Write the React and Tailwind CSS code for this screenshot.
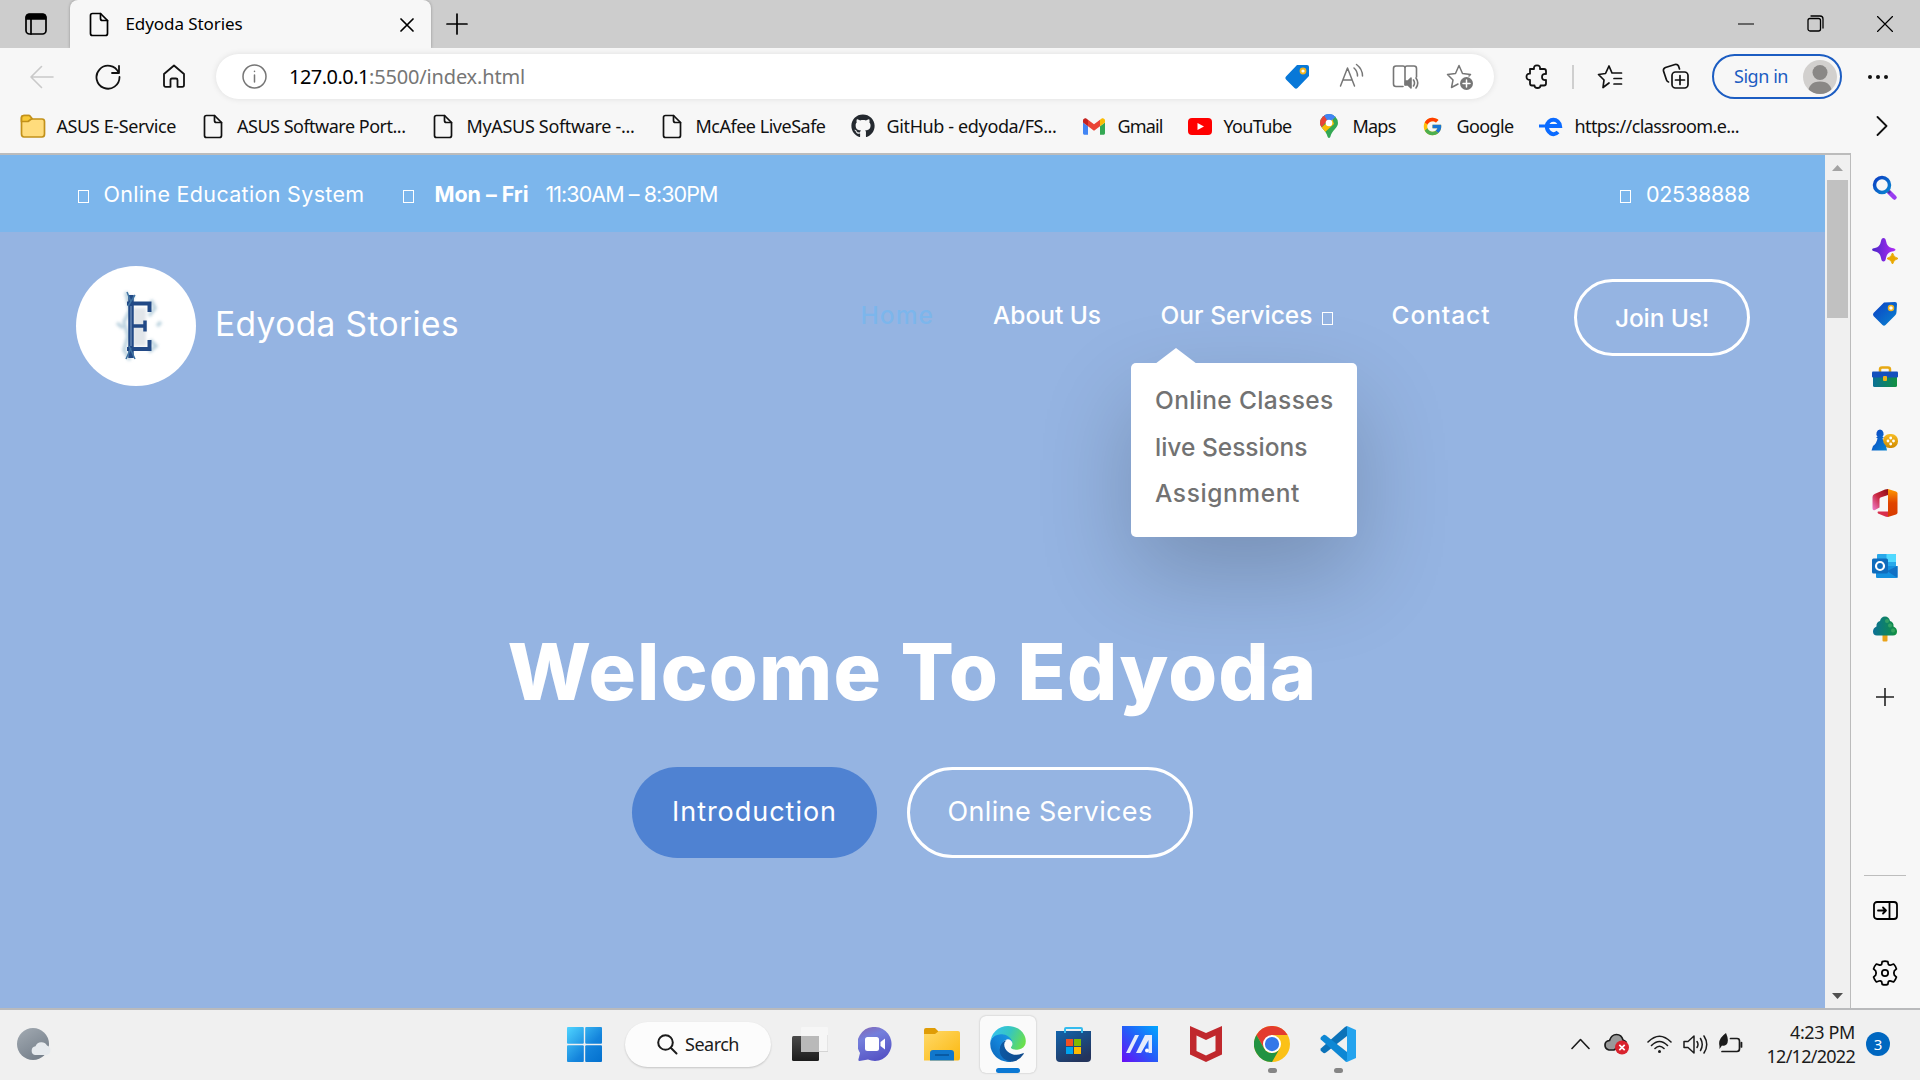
import { useLayoutEffect, useRef, useState } from "react";
import { FaGithub } from "react-icons/fa";
import { FcGoogle } from "react-icons/fc";

/* Single line of text whose tracking is computed so that it fills `w` pixels. */
function Fit({ w, className = "", children }) {
  const ref = useRef(null);
  const [ls, setLs] = useState(0);
  useLayoutEffect(() => {
    const el = ref.current;
    el.style.letterSpacing = "0px";
    const natural = el.getBoundingClientRect().width;
    const n = el.textContent.length;
    const v = (w - natural) / n;
    el.style.letterSpacing = v + "px";
    setLs(v);
  }, [w]);
  return (
    <span ref={ref} className={"inline-block shrink-0 whitespace-nowrap " + className} style={{ letterSpacing: ls + "px" }}>
      {children}
    </span>
  );
}

function Svg({ w = 24, h, vb = "0 0 24 24", className = "", children, sw = 1.6 }) {
  return (
    <svg width={w} height={h ?? w} viewBox={vb} fill="none" stroke="currentColor" strokeWidth={sw} strokeLinecap="round" strokeLinejoin="round" className={"shrink-0 " + className}>
      {children}
    </svg>
  );
}

const PageIcon = ({ className = "" }) => (
  <Svg w={20} h={25} vb="0 0 20 25" className={className} sw={1.7}>
    <path d="M3.5 1.5H11.5L18.5 8.500V21.500Q18.500 23.500 16.500 23.500H3.500Q1.500 23.500 1.500 21.500V3.500Q1.500 1.500 3.500 1.500Z" />
    <path d="M11.500 1.500V6.500Q11.500 8.500 13.500 8.500H18.500" />
  </Svg>
);

const Tofu = ({ className = "" }) => <span className={"inline-block h-[13px] w-[11px] shrink-0 border border-white " + className} />;

function TabStrip() {
  return (
    <div className="flex h-12 items-center bg-[#cdcdcd] text-black">
      <Svg w={22} className="ml-[25px]" vb="0 0 22 22" sw={1.7}>
        <rect x="1" y="1" width="20" height="20" rx="3.500" />
        <path d="M1.500 6V4Q1.500 1.500 4 1.500H18Q20.500 1.500 20.500 4V6Z" fill="currentColor" />
        <path d="M6 6V21" />
      </Svg>
      <div className="ml-[23px] flex h-12 w-[361px] items-center rounded-t-lg bg-[#f7f7f7] shadow-[0_0_3px_rgba(0,0,0,0.3)]">
        <PageIcon className="ml-[19px]" />
        <Fit w={117} className="mb-px ml-[16.5px] text-[17px] leading-6">Edyoda Stories</Fit>
        <Svg w={14} className="mt-[2px] ml-[157.5px]" vb="0 0 14 14" sw={1.7}><path d="M1 1L13 13M13 1L1 13" /></Svg>
      </div>
      <Svg w={22} className="mb-px ml-[15px]" vb="0 0 22 22" sw={1.700}><path d="M1 11H21M11 1V21" /></Svg>
      <div className="ml-auto flex items-center pr-[27px]">
        <Svg w={16} vb="0 0 16 16" sw={1.2}><path d="M0 8H16" /></Svg>
        <Svg w={17} className="mb-px ml-[53px]" vb="0 0 17 17" sw={1.3}>
          <rect x="1" y="3.500" width="12.500" height="12.500" rx="2" /><path d="M4 1H13Q16 1 16 4V13" />
        </Svg>
        <Svg w={16} className="ml-[53px]" vb="0 0 16 16" sw={1.200}><path d="M.5.5L15.500 15.500M15.500.5L.5 15.500" /></Svg>
      </div>
    </div>
  );
}

function Toolbar() {
  return (
    <div className="flex h-[57px] items-center bg-[#f7f7f7] text-[#111]">
      <Svg w={24} className="ml-[30px] text-[#c9c9c9]"><path d="M23 12H1M11.500 1.500L1 12L11.500 22.500" /></Svg>
      <Svg w={26} className="ml-[41px]" vb="0 0 26 26" sw={1.800}><path d="M23.500 8.500A11.500 11.500 0 1 0 24.500 13M24 2V9H17" /></Svg>
      <Svg w={24} className="mb-[2px] ml-[41px]" sw={1.800}><path d="M2 10L12 1.500L22 10V21Q22 22.800 20.300 22.800H15.500V16Q15.500 14.500 14 14.500H10Q8.500 14.500 8.500 16V22.800H3.700Q2 22.800 2 21Z" /></Svg>
      <div className="ml-[30px] flex h-[45px] w-[1278px] items-center rounded-full bg-white text-[#767676] shadow-[0_0_6px_rgba(0,0,0,0.1)]">
        <Svg w={25} className="ml-[26px]" vb="0 0 25 25" sw={1.500}><circle cx="12.500" cy="12.500" r="11.500" /><path d="M12.500 11V18M12.500 7.200V7.500" /></Svg>
        <Fit w={80} className="ml-[22px] text-[20px] leading-7 text-black">127.0.0.1</Fit>
        <Fit w={156} className="text-[20px] leading-7 text-[#767676]">:5500/index.html</Fit>
        <Svg w={26} className="ml-[759px]" vb="0 0 26 26"><path d="M13 1H23Q25 1 25 3V12L13.500 24Q12 25.500 10.500 24L2 15.500Q.5 14 2 12.500Z" fill="#0878d8" stroke="none" /><circle cx="19" cy="7" r="2.500" fill="#fff" stroke="#f2b51d" strokeWidth="1.800" /></Svg>
        <Svg w={25} className="mb-[2px] ml-[29px]" vb="0 0 25 25" sw={1.500}><path d="M1.500 23L8.500 5L15.500 23M4 17H13M15 5Q18.500 8 18.500 13M17.500 1.500Q23.500 6 23.500 13" /></Svg>
        <Svg w={28} className="ml-[28px]" vb="0 0 28 26" sw={1.600}>
          <path d="M13 4V21M13 4Q13 2 11 2H4Q1.500 2 1.500 4.500V20Q1.500 22.500 4 22.500H11M13 4Q13 2 15 2H22Q24.500 2 24.500 4.500V13" />
          <path d="M13.500 17H16L19 14V24L16 21H13.500Z" fill="currentColor" /><path d="M21.500 16Q23.500 19 21.500 22M24 14Q27.500 19 24 24" />
        </Svg>
        <Svg w={28} className="ml-[26px]" vb="0 0 28 28" sw={1.500}>
          <path d="M12 21L5.500 24.500L7 17L1.500 11.500L9.500 10.500L13 2.500L16.500 10.500L24.500 11.500L23 13" />
          <circle cx="20.500" cy="20.500" r="6.500" fill="currentColor" stroke="none" /><path d="M20.500 17V24M17 20.500H24" stroke="#fff" />
        </Svg>
      </div>
      <Svg w={25} className="ml-[31px]" vb="0 0 25 25" sw={1.800}><path d="M5 5H9Q8.500 1.300 12 1.300Q15.500 1.300 15 5H19Q21 5 21 7V10Q17 9.500 17 13Q17 16.500 21 16V19.500Q21 21.500 19 21.500H15.500Q15.500 24 12.500 24Q9.500 24 9.500 21.500H7Q5 21.500 5 19.500V16Q1.500 16 1.500 12.700Q1.500 9.500 5 9.700Z" /></Svg>
      <div className="ml-[22px] h-6 w-[2px] bg-[#cfcfcf]" />
      <Svg w={26} className="ml-[23px]" vb="0 0 26 26" sw={1.700}><path d="M12 19L6 23.500L7 16L1.500 10.500L8.500 9.500L12 2L15 9H24.500M17 14.500H24.500M17 20H24.500" /></Svg>
      <Svg w={27} className="ml-[39px]" vb="0 0 27 27" sw={1.700}><rect x="10" y="9" width="16" height="16" rx="3.500" /><path d="M18 12.500V21.500M13.500 17H22.500M6.500 19Q5 18.500 4.500 17L1.500 8Q1 5.500 3.500 4.500L13 1.500Q15.500 1 16.500 3L17.500 6" /></Svg>
      <div className="ml-[23px] flex h-[45px] w-[130px] items-center rounded-full border-2 border-[#1c5dc2] text-[#1c5dc2]">
        <Fit w={54} className="mb-px ml-[20px] text-[18px] leading-6">Sign in</Fit>
        <svg width="34" height="34" viewBox="0 0 34 34" className="ml-[15px] shrink-0"><clipPath id="av"><circle cx="17" cy="17" r="17" /></clipPath><g clipPath="url(#av)"><rect width="34" height="34" fill="#d2d0ce" /><circle cx="17" cy="12.500" r="7.500" fill="#8a8886" /><path d="M5 34Q5 21.500 17 21.500Q29 21.500 29 34Z" fill="#8a8886" /></g></svg>
      </div>
      <svg width="22" height="6" viewBox="0 0 22 6" className="ml-[25px] shrink-0" fill="currentColor"><circle cx="3" cy="3" r="2" /><circle cx="11" cy="3" r="2" /><circle cx="19" cy="3" r="2" /></svg>
    </div>
  );
}

const FolderMark = () => (
  <Svg w={26} vb="0 0 26 26" className="-mx-px" sw={1.700}><path d="M1.500 5Q1.500 2.500 4 2.500H9L12 6H22Q24.500 6 24.500 8.500V21Q24.500 24 22 24H4Q1.500 24 1.500 21Z" fill="#ffdc7c" stroke="#c2911a" /><path d="M1.500 8.500H8L12 5.500L9.500 2.500H4Q1.500 2.500 1.500 5Z" fill="#f8c937" stroke="#c2911a" /></Svg>
);
const Gmail = () => (
  <svg width="22" height="17" viewBox="52 42 88 66"><path fill="#4285f4" d="M58 108h14V74L52 59v43c0 3.320 2.690 6 6 6" /><path fill="#34a853" d="M120 108h14c3.320 0 6-2.690 6-6V59l-20 15" /><path fill="#fbbc04" d="M120 48v26l20-15v-8c0-7.420-8.470-11.650-14.400-7.200" /><path fill="#ea4335" d="M72 74V48l24 18 24-18v26L96 92" /><path fill="#c5221f" d="M52 51v8l20 15V48l-5.600-4.200c-5.940-4.450-14.400-.22-14.400 7.200" /></svg>
);
const YouTube = () => (<svg width="24" height="17" viewBox="0 0 24 17"><rect width="24" height="17" rx="4" fill="#f00" /><path d="M9.500 5L16 8.500L9.500 12Z" fill="#fff" /></svg>);
const MapsPin = () => (
  <svg width="18" height="24" viewBox="0 0 18 24"><clipPath id="pin"><path d="M9 0A9 9 0 0 1 18 9C18 14 12 16 10.300 23Q9 25 7.700 23C6 16 0 14 0 9A9 9 0 0 1 9 0Z" /></clipPath>
    <g clipPath="url(#pin)"><rect width="18" height="24" fill="#34a853" /><path d="M0 0H18L9 9Z" fill="#4285f4" /><path d="M0 0L4 0L9 5L0 15Z" fill="#ea4335" /><path d="M0 15L12 4L14 10L4 19Z" fill="#fbbc04" /><path d="M3 0H18L9 9Z" fill="#4285f4" /></g><circle cx="9" cy="9" r="3.300" fill="#fff" /></svg>
);
const ClassroomE = () => (<svg width="24" height="22" viewBox="0 0 24 22" fill="none"><path d="M8 11H21A6.700 7.500 0 0 0 7.800 11A6.700 8 0 0 0 19 17" stroke="#0b6bff" strokeWidth="4" /><path d="M0 11H8" stroke="#0b6bff" strokeWidth="3" /></svg>);

const bookmarks = [
  [FolderMark, "ASUS E-Service", 119.5], [PageIcon, "ASUS Software Port...", 168.500], [PageIcon, "MyASUS Software -...", 168],
  [PageIcon, "McAfee LiveSafe", 130], [() => <FaGithub size={24} color="#24292f" />, "GitHub - edyoda/FS...", 170], [Gmail, "Gmail", 45],
  [YouTube, "YouTube", 68], [MapsPin, "Maps", 43], [() => <FcGoogle size={21} />, "Google", 57], [ClassroomE, "https://classroom.e...", 164.500],
];

function Bookmarks() {
  return (
    <div className="flex h-12 items-center gap-[25px] bg-[#f7f7f7] pb-[6px] pl-[20.5px] text-[#111]">
      {bookmarks.map(([Icon, label, w]) => (
        <div key={label} className="flex h-full items-center gap-[12px]">
          <span className="flex w-6 justify-center">{<Icon />}</span>
          <Fit w={w} className="mb-[1px] text-[18px] leading-6">{label}</Fit>
        </div>
      ))}
      <Svg w={12} h={20} className="mr-[32px] ml-auto" vb="0 0 12 20" sw={1.800}><path d="M1.500 1L10.500 10L1.500 19" /></Svg>
    </div>
  );
}

function Logo() {
  return (
    <div className="flex h-[120px] w-[120px] shrink-0 items-center justify-center rounded-full bg-white">
      <svg width="70" height="80" viewBox="0 0 70 80">
        <defs><filter id="ink" x="-20%" y="-20%" width="140%" height="140%"><feGaussianBlur stdDeviation="1.500" /></filter><filter id="soft"><feGaussianBlur stdDeviation=".5" /></filter></defs>
        <g filter="url(#ink)" stroke="#a9c6d6" strokeWidth="3.500" fill="none" opacity=".8"><path d="M25 6L29 24L23 36L27 50L23 64L29 74M32 10L28 20M50 14L54 22L48 30M49 54L55 60L48 66M16 37L22 42M56 40L60 36" /><path d="M32 22H45V60H32Z" fill="#dadfe4" stroke="none" /></g>
        <g filter="url(#soft)" fill="none" stroke="#234a86"><path d="M30 9V72" strokeWidth="5.500" /><path d="M26 17.500H48.500V26M26 63H48.500V54" strokeWidth="4" /><path d="M31 40H44M44 34.500V45.500" strokeWidth="3.500" /><path d="M26 6L30 16M34 9L27 20M25 73L30 62M34 73L28 60" strokeWidth="1.500" stroke="#3f73a2" /><path d="M30 20V60" stroke="#6485b0" strokeWidth="1.500" /></g>
      </svg>
    </div>
  );
}

function Site() {
  return (
    <div className="flex w-[1825px] flex-col bg-[#95b4e2] font-[Inter,sans-serif] text-white">
      <div className="flex h-[77px] items-start bg-[#7cb6ec] pt-[23px] pl-[78px] text-[21.5px] leading-8">
        <Tofu className="mt-[12px]" />
        <Fit w={261} className="ml-[14.5px]">Online Education System</Fit>
        <Tofu className="mt-[12px] ml-[38.5px]" />
        <Fit w={94} className="ml-[20.5px] font-bold">Mon – Fri</Fit>
        <Fit w={172} className="ml-[17px]">11:30AM – 8:30PM</Fit>
        <Tofu className="mt-[12px] mr-[15px] ml-auto" />
        <Fit w={104} className="mr-[75px]">02538888</Fit>
      </div>
      <div className="flex pt-[34px] pl-[76px]">
        <Logo />
        <Fit w={244} className="mt-[34px] ml-[19px] text-[33.5px] leading-[48px]">Edyoda Stories</Fit>
        <nav className="ml-auto flex text-[24.5px] leading-9 font-medium">
          <Fit w={73.5} className="mt-[31px] text-[#7cb6ec]">Home</Fit>
          <Fit w={108} className="mt-[31px] ml-[59px]">About Us</Fit>
          <div className="relative mt-[31px] ml-[59.5px] flex">
            <Fit w={152}>Our Services</Fit>
            <Tofu className="mt-[15px] ml-[9.5px]" />
            <div className="absolute top-[66px] -left-[29.5px] flex h-[174px] w-[226px] flex-col rounded-[5px] bg-white pt-[14px] pl-[24px] leading-[46.5px] text-[#727272] shadow-[0_38px_95px_rgba(0,0,0,0.2)]">
              <span className="absolute -top-[15px] left-[24px] h-4 w-[42px] bg-white [clip-path:polygon(50%_0,100%_100%,0_100%)]" />
              <Fit w={178.5} className="self-start">Online Classes</Fit>
              <Fit w={152.5} className="self-start">live Sessions</Fit>
              <Fit w={145} className="self-start">Assignment</Fit>
            </div>
          </div>
          <Fit w={99} className="mt-[31px] ml-[58.5px]">Contact</Fit>
          <div className="mt-[13px] mr-[75px] ml-[83.5px] flex h-[77px] w-[176px] justify-center rounded-full border-[3px] border-white pt-[18px]">
            <Fit w={94}>Join Us!</Fit>
          </div>
        </nav>
      </div>
      <main className="mt-[225px] flex flex-col items-center">
        <Fit w={810} className="text-[79px] leading-[120px] font-extrabold">Welcome To Edyoda</Fit>
        <div className="mt-[36px] flex gap-[30px] text-[27px] leading-10">
          <div className="flex h-[91px] w-[245px] justify-center rounded-full bg-[#4f82d2] pt-[25px]"><Fit w={165}>Introduction</Fit></div>
          <div className="flex h-[91px] w-[286px] justify-center rounded-full border-[3px] border-white pt-[22px]"><Fit w={205}>Online Services</Fit></div>
        </div>
      </main>
    </div>
  );
}

function Scrollbar() {
  return (
    <div className="flex w-[25px] flex-col items-center bg-[#f0f0f0]">
      <div className="mt-[10px] h-[6px] w-[11px] bg-[#a3a3a3] [clip-path:polygon(50%_0,100%_100%,0_100%)]" />
      <div className="mt-[9px] h-[138px] w-[21px] bg-[#c1c1c1]" />
      <div className="mt-auto mb-[9px] h-[6px] w-[11px] bg-[#505050] [clip-path:polygon(0_0,100%_0,50%_100%)]" />
    </div>
  );
}

function SideBar() {
  const cell = "flex h-[63px] items-center justify-center";
  return (
    <div className="flex w-[70px] flex-col border-l border-[#bcbcbc] bg-[#f7f7f7] pt-[3.5px] pr-px text-[#222]">
      <svg width="0" height="0" className="absolute"><defs>
        <linearGradient id="bl" x1="0" y1="0" x2="1" y2="1"><stop stopColor="#0c3fc4" /><stop offset="1" stopColor="#0a86d0" /></linearGradient>
        <linearGradient id="pu" x1="0" y1="0" x2="1" y2="0"><stop stopColor="#4a25c8" /><stop offset="1" stopColor="#b12cf5" /></linearGradient>
        <linearGradient id="gn" x1="0" y1="0" x2="1" y2="0"><stop stopColor="#0b7096" /><stop offset="1" stopColor="#129140" /></linearGradient>
        <linearGradient id="go" x1="0" y1="0" x2="0" y2="1"><stop stopColor="#f7bd25" /><stop offset="1" stopColor="#d08a00" /></linearGradient>
        <linearGradient id="of" x1="1" y1="0" x2="0" y2="1"><stop stopColor="#8d0d14" /><stop offset=".5" stopColor="#c92740" /><stop offset="1" stopColor="#ef7fcf" /></linearGradient>
        <linearGradient id="oo" x1="0" y1="0" x2="0" y2="1"><stop stopColor="#ff9a00" /><stop offset=".5" stopColor="#e04400" /><stop offset="1" stopColor="#d83b01" /></linearGradient>
      </defs></svg>
      <div className={cell}><svg width="26" height="26" viewBox="0 0 26 26" fill="none"><path d="M16 16L22.500 22.500" stroke="#9a3df0" strokeWidth="4.500" strokeLinecap="round" /><path d="M15.500 15.500L18 18" stroke="#4a3a9c" strokeWidth="2.500" /><circle cx="10" cy="10" r="7.500" stroke="url(#bl)" strokeWidth="3.500" /></svg></div>
      <div className={cell}><svg width="28" height="28" viewBox="0 0 28 28"><path d="M12.500 1Q14.500 1 15 4Q16 10 21 11Q24.500 11.500 24.500 12.700T21 14.500Q16 15.500 15 21Q14.500 24.500 12.500 24.500T10 21Q9 15.500 4 14.500Q1 14 1 12.700T4 11Q9 10 10 4Q10.500 1 12.500 1Z" fill="url(#pu)" /><path d="M21.500 16Q22.500 20.500 27 21.500Q22.500 22.500 21.500 27Q20.500 22.500 16 21.500Q20.500 20.500 21.500 16Z" fill="#eaa800" stroke="#eaa800" /></svg></div>
      <div className={cell}><svg width="26" height="26" viewBox="0 0 26 26"><path d="M12 1.500L23 1Q25 1 25 3L24.500 11Q24.500 13 23 14.500L13.500 24Q12 25.500 10.500 24L1.500 15Q.5 13.500 1.500 12Z" fill="url(#bl)" /><circle cx="19" cy="7" r="2.500" fill="#fff" stroke="#f2b51d" strokeWidth="1.500" /></svg></div>
      <div className={cell}><svg width="26" height="22" viewBox="0 0 26 22"><path d="M8 6V3.500Q8 1.500 10 1.500H16Q18 1.500 18 3.500V6" stroke="#e7a914" strokeWidth="2.500" fill="none" /><rect x="1" y="9" width="24" height="12" rx="1.500" fill="url(#gn)" /><rect y="5.500" width="26" height="6" rx="1" fill="#1450bd" /><rect x="11" y="10" width="4" height="5" rx="1" fill="#eeb31c" /></svg></div>
      <div className={cell}><svg width="28" height="22" viewBox="0 0 28 22"><rect x="12" y="5" width="15" height="14" rx="6.500" fill="url(#go)" /><g fill="#fff"><circle cx="17" cy="12" r="1.400" /><circle cx="22.500" cy="12" r="1.400" /><circle cx="19.700" cy="9" r="1.400" /><circle cx="19.700" cy="15" r="1.400" /></g><path d="M9 .5A4.200 4.200 0 0 1 11.500 7.500L13 9H11.500Q12 14 15 17L16 21.500H.5L2 17Q6 14 6.500 9H5L6.500 7.500A4.200 4.200 0 0 1 9 .5Z" fill="url(#bl)" /></svg></div>
      <div className={cell}><svg width="26" height="28" viewBox="0 0 26 28"><path d="M16 0L24 2.500Q25.500 3 25.500 4.500V23.500Q25.500 25 24 25.500L16 28Z" fill="url(#oo)" /><path d="M16 0V6L8.500 8.500Q7.500 9 7.500 10V18.500L3 21Q.5 22 .5 19V8Q.5 6 2.500 5L13 .5Q14.500 0 16 0Z" fill="url(#of)" /><path d="M6 22.500H16V28L14 27.800L6 24.500Q5 23 6 22.500Z" fill="#d92f4c" /></svg></div>
      <div className={cell}><svg width="26" height="24" viewBox="0 0 26 24"><rect x="5" width="19" height="16" rx="1" fill="#28a8ea" /><path d="M14.500 0H23Q24 0 24 1V8H14.500Z" fill="#50d9ff" /><path d="M4 12L25.500 12V23Q25.500 24 24 24H5Q4 24 4 23Z" fill="#1490df" /><path d="M25.500 12V24L15 17Z" fill="#1270c4" /><rect y="4.500" width="16" height="15" rx="1.500" fill="#0f6cbd" /><circle cx="8" cy="12" r="4" fill="none" stroke="#fff" strokeWidth="2.200" /></svg></div>
      <div className={cell}><svg width="26" height="26" viewBox="0 0 26 26"><rect x="10.500" y="17" width="5" height="8.500" rx="1" fill="#eaa31a" /><path d="M13 .5Q17 .5 18 5Q22 6 21.500 10.500Q25 12 25 15.500Q25 19.500 21 19.500H5Q1 19.500 1 15.500Q1 12 4.500 10.500Q4 6 8 5Q9 .5 13 .5Z" fill="url(#gn)" /><g fill="#4bb36a" opacity=".6"><circle cx="15" cy="5" r="2" /><circle cx="18" cy="9.500" r="2" /><circle cx="21" cy="14.500" r="2" /></g></svg></div>
      <Svg w={18} className="mx-auto mt-[27px]" vb="0 0 18 18" sw={1.600}><path d="M0 9H18M9 0V18" /></Svg>
      <div className="mx-auto mt-[169px] h-[1.5px] w-[42px] bg-[#bdbdbd]" />
      <Svg w={25} h={19} className="mx-auto mt-[25px] text-black" vb="0 0 25 19" sw={1.800}><rect x="1" y="1" width="23" height="17" rx="3" /><path d="M16.500 1V18M5 9.500H13M10 6.500L13 9.500L10 12.500" /></Svg>
      <Svg w={28} h={28} className="mx-auto mt-[39px] text-black" vb="0 0 24 24" sw={1.500}><path d="M9.600 2.200Q12 1.400 14.400 2.200L14.900 4.600Q15.700 5.600 17.100 5.100L19.400 4.300Q21.100 6.100 21.800 8.500L20 10.200Q19.200 12 20 13.800L21.800 15.500Q21.100 17.900 19.400 19.700L17.100 18.900Q15.700 18.400 14.900 19.400L14.400 21.800Q12 22.600 9.600 21.800L9.100 19.400Q8.300 18.400 6.900 18.900L4.600 19.700Q2.900 17.900 2.200 15.500L4 13.800Q4.800 12 4 10.200L2.200 8.500Q2.900 6.100 4.600 4.300L6.900 5.100Q8.300 5.600 9.100 4.600Z" /><circle cx="12" cy="12" r="2.700" /></Svg>
    </div>
  );
}

function Taskbar() {
  return (
    <div className="flex h-[72px] items-center border-t-2 border-[#b9babc] bg-[#f0f0f0] pb-[2px] text-[#1b1b1b]">
      <svg width="34" height="34" viewBox="0 0 34 34" className="ml-[17px] shrink-0"><defs><linearGradient id="mo" x1="0" y1="0" x2=".6" y2="1"><stop stopColor="#a3abb3" /><stop offset="1" stopColor="#76808b" /></linearGradient></defs><circle cx="16" cy="17" r="16" fill="url(#mo)" /><path d="M18 28A4.500 4.500 0 0 1 18.500 19.200A6.500 6.500 0 0 1 30 18.500A5 5 0 0 1 30 28Z" fill="#e6eaee" /></svg>
      <svg width="35" height="35" viewBox="0 0 35 35" className="ml-[516px] shrink-0"><defs><linearGradient id="wi" gradientUnits="userSpaceOnUse" x1="0" y1="0" x2="35" y2="35"><stop stopColor="#4fd4ff" /><stop offset=".6" stopColor="#1484dc" /><stop offset="1" stopColor="#0370ce" /></linearGradient></defs><g fill="url(#wi)"><rect width="16.800" height="16.800" rx="1" /><rect x="18.200" width="16.800" height="16.800" rx="1" /><rect y="18.200" width="16.800" height="16.800" rx="1" /><rect x="18.200" y="18.200" width="16.800" height="16.800" rx="1" /></g></svg>
      <div className="ml-[23px] flex h-[45px] w-[146px] shrink-0 items-center rounded-full bg-[#fcfcfc] shadow-[0_1px_2px_rgba(0,0,0,0.18)]">
        <Svg w={21} className="ml-[32px]" vb="0 0 21 21" sw={2}><circle cx="8.500" cy="8.500" r="7.300" /><path d="M14 14L19.500 19.500" /></Svg>
        <Fit w={54} className="ml-[7px] text-[18px] leading-6">Search</Fit>
      </div>
      <svg width="36" height="34" viewBox="0 0 36 34" className="ml-[21px] shrink-0"><defs><linearGradient id="tv" x1="0" y1="0" x2="0" y2="1"><stop stopColor="#4a4a4a" /><stop offset="1" stopColor="#1c1c1c" /></linearGradient></defs><rect y="9" width="27" height="25" rx="1.500" fill="url(#tv)" /><rect x="9" width="27" height="25" rx="1" fill="#f6f6f6" opacity=".95" /><rect x="9" y="9" width="18" height="16" fill="#b9b9b9" /><path d="M27 24.500H36V8" stroke="#d4d4d4" fill="none" /></svg>
      <svg width="34" height="34" viewBox="0 0 34 34" className="ml-[30px] shrink-0"><defs><linearGradient id="ch" x1=".2" y1="0" x2=".6" y2="1"><stop stopColor="#8269b8" /><stop offset=".3" stopColor="#747fdc" /><stop offset="1" stopColor="#5552c4" /></linearGradient></defs><path d="M17.500 0A16.700 17 0 1 1 10 32.500L1.500 34Q0 34 .5 32L2 26A17 17 0 0 1 17.500 0Z" fill="url(#ch)" /><rect x="7" y="10" width="14" height="14" rx="2.500" fill="#fff" /><path d="M22.500 15L27 11.500V22.500L22.500 19Z" fill="#fff" /></svg>
      <svg width="36" height="34" viewBox="0 0 36 34" className="ml-[32px] shrink-0"><defs><linearGradient id="fo" x1="0" y1="0" x2="1" y2="1"><stop stopColor="#ffd968" /><stop offset="1" stopColor="#fbb810" /></linearGradient></defs><path d="M0 3Q0 1 2 1H11L15 5H33Q36 5 36 8V12H0Z" fill="#df9c06" /><path d="M0 7H11L15 4H34Q36 4 36 6V31Q36 33.500 34 33.500H0Z" fill="url(#fo)" /><path d="M6 33.500V26Q6 23 9 23H27Q30 23 30 26V33.500Z" fill="#1077cc" /><path d="M11 28H25" stroke="#07539a" strokeWidth="1.600" /></svg>
      <div className="ml-[20px] flex h-[57px] w-[56px] shrink-0 flex-col items-center rounded-md bg-[#fafafa] pt-[10px] shadow-[0_0_2px_rgba(0,0,0,0.25)]">
        <svg width="36" height="36" viewBox="0 0 256 259"><defs>
          <linearGradient id="e1" x1="0" x2="1"><stop stopColor="#0c59a4" /><stop offset="1" stopColor="#114a8b" /></linearGradient>
          <linearGradient id="e2" x1="1" y1="0" x2="0" y2="1"><stop stopColor="#1b9de2" /><stop offset=".5" stopColor="#1383d8" /><stop offset="1" stopColor="#0b62b5" /></linearGradient>
          <linearGradient id="e3" x1="0" y1=".3" x2="1" y2=".6"><stop stopColor="#35c1f1" /><stop offset=".5" stopColor="#36c6c0" /><stop offset="1" stopColor="#6be04a" /></linearGradient></defs>
          <path fill="url(#e1)" d="M235.680 195.460a93.730 93.730 0 0 1-10.540 4.710 101.870 101.870 0 0 1-35.900 6.460c-47.320 0-88.540-32.550-88.540-74.320A31.480 31.480 0 0 1 117.130 105c-42.800 1.800-53.800 46.400-53.800 72.530 0 73.880 68.090 81.370 82.760 81.370 7.910 0 19.840-2.300 27-4.560l1.310-.44a128.340 128.340 0 0 0 66.600-52.800 4 4 0 0 0-5.320-5.640z" />
          <path fill="url(#e2)" d="M105.730 241.420A79.200 79.200 0 0 1 83 220.080a80.720 80.720 0 0 1 29.500-120c3.200-1.500 8.500-4.150 15.600-4a32.370 32.370 0 0 1 25.690 13 31.880 31.880 0 0 1 6.300 18.660c0-.21 24.460-79.600-80-79.600-43.900 0-80 41.660-80 78.210a130.150 130.150 0 0 0 12.110 56 128 128 0 0 0 156.380 67.110 75.550 75.550 0 0 1-62.780-8z" />
          <path fill="url(#e3)" d="M152.330 148.860c-.81 1.050-3.300 2.500-3.300 5.660 0 2.610 1.700 5.120 4.720 7.230 14.380 10 41.490 8.680 41.560 8.680a59.560 59.560 0 0 0 30.270-8.350A61.380 61.380 0 0 0 256 109.180c.26-22.410-8-37.310-11.340-43.910C223.460 23.840 177.720 0 128 0A128 128 0 0 0 0 126.200c.48-36.540 36.800-66.050 80-66.050 3.500 0 23.460.34 42 10.070 16.340 8.580 24.900 18.940 30.850 29.210 6.180 10.670 7.280 24.150 7.280 29.520s-2.740 13.330-7.800 19.910z" />
        </svg>
        <div className="mt-[6px] h-[5px] w-6 rounded-full bg-[#0a78d4]" />
      </div>
      <svg width="35" height="35" viewBox="0 0 35 35" className="ml-[20px] shrink-0"><defs><linearGradient id="st" x1="0" y1="0" x2=".6" y2="1"><stop stopColor="#1264ac" /><stop offset="1" stopColor="#24345c" /></linearGradient></defs><path d="M0 4H35V31Q35 35 31 35H4Q0 35 0 31Z" fill="url(#st)" /><path d="M9 6V2Q9 1 10 1H25Q26 1 26 2V6" stroke="#34bbee" strokeWidth="2" fill="none" /><rect x="10" y="12" width="7" height="7" fill="#f25022" /><rect x="18" y="12" width="7" height="7" fill="#7fba00" /><rect x="10" y="20" width="7" height="7" fill="#00a4ef" /><rect x="18" y="20" width="7" height="7" fill="#ffb900" /></svg>
      <svg width="36" height="36" viewBox="0 0 36 36" className="ml-[31px] shrink-0"><defs><linearGradient id="ma" x1="0" y1="1" x2="1" y2="0"><stop stopColor="#6a0cf5" /><stop offset=".5" stopColor="#255cf8" /><stop offset="1" stopColor="#00a8ff" /></linearGradient></defs><rect width="36" height="36" fill="url(#ma)" /><path d="M4 27L13 9H17L8 27ZM14 27L23 9H30V27H26.500V14L19 27Z" fill="#e4ebfc" /><circle cx="25" cy="24.500" r="2" fill="#fff" /></svg>
      <svg width="32" height="36" viewBox="0 0 32 36" className="ml-[32px] shrink-0"><path d="M0 0L16 7L32 0V28.500L16 36L0 28.500Z" fill="#c0282d" /><path d="M6.500 9.500L16 14L25.500 9.500V25L16 29.500L6.500 25Z" fill="#f2f2f2" /></svg>
      <div className="ml-[32px] flex shrink-0 flex-col items-center gap-[6px] pt-[11px]">
        <svg width="36" height="36" viewBox="0 0 48 48"><circle cx="24" cy="24" r="24" fill="#fbc117" /><path d="M3.200 12A24 24 0 0 1 44.800 12H24L13.600 30Z" fill="#e33b2e" /><path d="M3.200 12L13.600 30A12 12 0 0 0 34.400 30L24 48A24 24 0 0 1 3.200 12Z" fill="#229342" /><circle cx="24" cy="24" r="12" fill="#fff" /><circle cx="24" cy="24" r="9.500" fill="#3478e8" /></svg>
        <div className="h-[5px] w-[9px] rounded-full bg-[#858585]" />
      </div>
      <div className="ml-[30px] flex shrink-0 flex-col items-center gap-[6px] pt-[11px]">
        <svg width="36" height="36" viewBox="0 0 36 36"><path d="M.8 22.500Q0 24 1 25L3.500 27Q4.500 27.500 6 26.500L27 10V0L25 1Z" fill="#0c72b8" /><path d="M.8 13.500Q0 12 1 11L3.500 9Q4.500 8.500 6 9.500L27 26V36L25 35Z" fill="#0e87d4" /><path d="M27 0L36 4V32L27 36Q26 36 25 35L27 34Z" fill="#24a3ee" /></svg>
        <div className="h-[5px] w-[9px] rounded-full bg-[#858585]" />
      </div>
      <Svg w={19} h={12} className="ml-[215px]" vb="0 0 19 12" sw={1.600}><path d="M1 10.500L9.500 1.500L18 10.500" /></Svg>
      <svg width="26" height="22" viewBox="0 0 26 22" className="ml-[14px] shrink-0"><path d="M5 17Q1 16 1 12Q1 8 5.500 7.500Q7.500 1.500 12.500 1.500Q17.500 1.500 19 7Q21 7.500 22 9L10 17Z" fill="#9a9a9a" stroke="#1b1b1b" strokeWidth="1.700" /><circle cx="18" cy="14.500" r="7" fill="#d9232e" /><path d="M15.300 11.800L20.700 17.200M20.700 11.800L15.300 17.200" stroke="#fff" strokeWidth="1.700" /></svg>
      <Svg w={25} h={19} className="ml-[17px]" vb="0 0 25 19" sw={1.600}><path d="M1 7Q12.500-4.500 24 7M4.500 10.500Q12.500 2.500 20.500 10.500M8 13.500Q12.500 9 17 13.500" /><circle cx="12.500" cy="16.500" r="1.500" fill="currentColor" stroke="none" /></Svg>
      <Svg w={25} h={21} className="ml-[11px]" vb="0 0 25 21" sw={1.500}><path d="M1 7.500H5L11 2V19L5 13.500H1ZM14 7.500Q16 10.500 14 13.500M17.500 4.500Q21 10.500 17.500 16.500M21 2Q26.500 10.500 21 19" /></Svg>
      <Svg w={26} h={20} className="mb-[3px] ml-[10px]" vb="0 0 26 20" sw={1.700}><path d="M12.500 5.500H19Q21.500 5.500 21.500 8V15.500Q21.500 18.500 19 18.500H4M23.500 9.500V14" /><path d="M1.500 13Q-.5 6 8 0Q11.500 8 8.500 11.500Q6 13.500 4 12.500L1.500 16Z" fill="currentColor" stroke="none" /></Svg>
      <div className="ml-auto flex flex-col items-end text-[18px] leading-6">
        <Fit w={65}>4:23 PM</Fit>
        <Fit w={88.5}>12/12/2022</Fit>
      </div>
      <div className="mr-[30px] ml-[11px] flex size-6 shrink-0 items-center justify-center rounded-full bg-[#0067c0] text-[15px] leading-none text-white">3</div>
    </div>
  );
}

export default function App() {
  return (
    <div className="flex h-[1080px] w-[1920px] flex-col overflow-hidden bg-[#f7f7f7] font-['Noto_Sans',sans-serif]">
      <TabStrip />
      <Toolbar />
      <Bookmarks />
      <div className="flex h-[855px]">
        <div className="flex w-[1850px] border-t-2 border-[#bcbcbc]">
          <Site />
          <Scrollbar />
        </div>
        <SideBar />
      </div>
      <Taskbar />
    </div>
  );
}
